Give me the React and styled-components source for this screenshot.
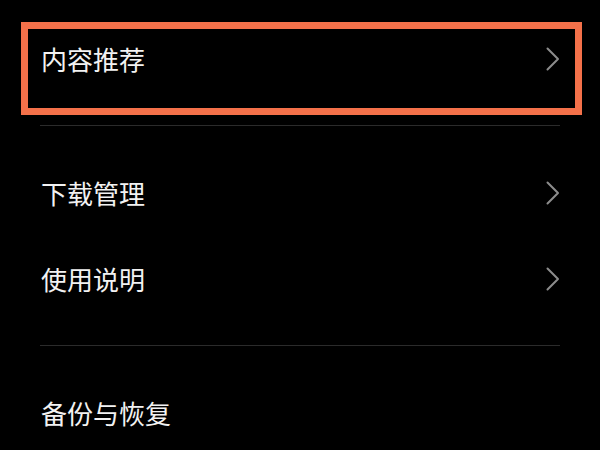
import styled, { createGlobalStyle } from "styled-components";

const GlobalStyle = createGlobalStyle`
  html, body {
    margin: 0;
    padding: 0;
    background: #000;
  }
  body {
    font-family: "Noto Sans CJK SC", "Noto Sans", sans-serif;
  }
`

const Page = styled.div`
  width: 600px;
  height: 450px;
  overflow: hidden;
  background: #000;
  padding: 16px 40px 0;
  box-sizing: border-box;
`

const Group = styled.div`
  display: flex;
  flex-direction: column;
`

const Divider = styled.div`
  height: 1px;
  background: #2b2b2b;
  margin: 23px 0 24px;
`

const Row = styled.div`
  position: relative;
  height: 86px;
  display: flex;
  align-items: center;
  justify-content: space-between;

  ${({ $highlighted }) => $highlighted && `
    &::after {
      content: "";
      position: absolute;
      left: -19px;
      right: -22px;
      top: 6px;
      bottom: -13px;
      border: 7px solid #f4714a;
      pointer-events: none;
    }
  `}
`

const Label = styled.span`
  color: #f2f2f2;
  font-size: 26px;
  line-height: 1;
  padding-left: 1px;
`

const Chevron = () => (
  <svg width="14" height="24" viewBox="0 0 14 24" fill="none">
    <path d="M1.5 1.5 L12 12 L1.5 22.5" stroke="#8c8c8c" strokeWidth="2" strokeLinecap="round" strokeLinejoin="round" />
  </svg>
)

function Item({ label, arrow = true, highlighted }) {
  return (
    <Row $highlighted={highlighted}>
      <Label>{label}</Label>
      {arrow && <Chevron />}
    </Row>
  )
}

function App() {
  return (
    <Page>
      <GlobalStyle />
      <Group>
        <Item label="内容推荐" highlighted />
      </Group>
      <Divider />
      <Group>
        <Item label="下载管理" />
        <Item label="使用说明" />
      </Group>
      <Divider />
      <Group>
        <Item label="备份与恢复" arrow={false} />
      </Group>
    </Page>
  )
}

export default App;
